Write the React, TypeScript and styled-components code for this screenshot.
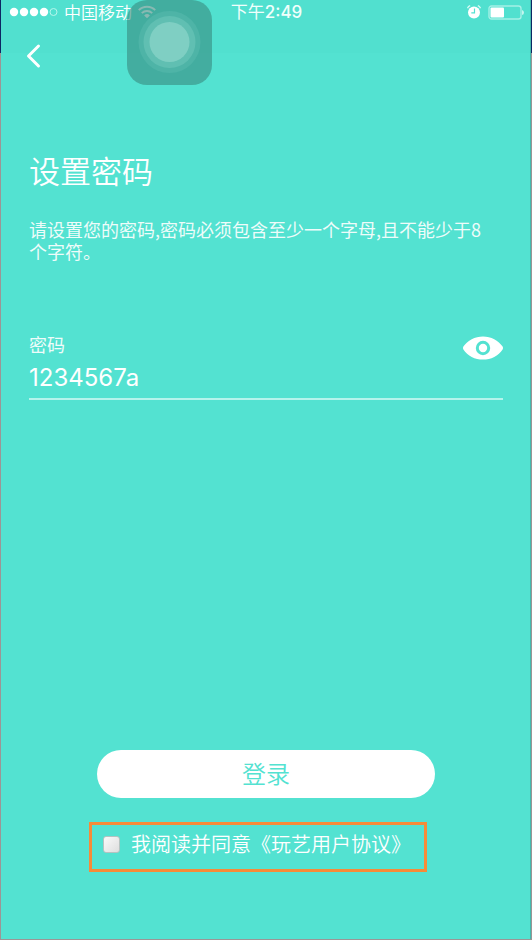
import React, { useState } from 'react';
import styled, { createGlobalStyle } from 'styled-components';

const teal = '#53e2d1';
const cjk = '"Noto Sans CJK SC", sans-serif';

const GlobalStyle = createGlobalStyle`
  * { box-sizing: border-box; }
  body { margin: 0; font-family: ${cjk}; }
`;

const Backdrop = styled.div`
  display: flex;
  min-height: 100vh;
  padding: 0 1px 1px;
  background: linear-gradient(#0d2763 0 53px, #9c9595 53px);
`;

const Screen = styled.main`
  position: relative;
  flex: 1;
  display: flex;
  flex-direction: column;
  color: #fff;
  background: linear-gradient(#51e0cf 0 53px, ${teal} 53px);
  border-right: 1px solid #46b9ad;
`;

const StatusBar = styled.header`
  display: grid;
  grid-template-columns: 1fr auto 1fr;
  align-items: center;
  height: 24px;
  padding: 0 6px 0 8px;
`;

const StatusGroup = styled.div<{ $end?: boolean }>`
  display: flex;
  align-items: center;
  justify-content: ${p => (p.$end ? 'flex-end' : 'flex-start')};
  gap: ${p => (p.$end ? 7 : 6)}px;
`;

const Carrier = styled.span`
  font-size: 17px;
  font-weight: 350;
  line-height: 24px;
  white-space: nowrap;
`;

const Time = styled.time`
  font: 500 17px/24px Inter, ${cjk};
  color: #f0fffc;
`;

const TimePeriod = styled.span`
  font-weight: 400;
`;

const AssistiveTouch = styled.button`
  position: absolute;
  top: 0;
  left: 126px;
  width: 85px;
  height: 85px;
  padding: 0;
  border: 0;
  border-radius: 20px;
  background: rgba(57, 139, 127, 0.6);
`;

const NavBar = styled.nav`
  display: flex;
  align-items: center;
  height: 64px;
  padding-left: 22px;
`;

const IconButton = styled.button`
  display: flex;
  padding: 0;
  border: 0;
  background: none;
  color: inherit;
  cursor: pointer;
`;

const Form = styled.form`
  flex: 1;
  display: flex;
  flex-direction: column;
  padding: 60px 27px 67px 28px;
`;

const Title = styled.h1`
  margin: 0;
  font-size: 31px;
  font-weight: 350;
  line-height: 44px;
`;

const Description = styled.p`
  margin: 26px 0 0;
  font-size: 18px;
  font-weight: 400;
  line-height: 22px;
  opacity: 0.9;
`;

const Field = styled.div`
  display: grid;
  grid-template-columns: 1fr auto;
  align-items: start;
  margin-top: 69px;
  padding-bottom: 2px;
  border-bottom: 2px solid #b5f4ec;
`;

const FieldLabel = styled.label`
  font-size: 18px;
  font-weight: 400;
  line-height: 26px;
  opacity: 0.9;
`;

const RevealButton = styled(IconButton)`
  padding-top: 5px;
`;

const PasswordInput = styled.input`
  grid-column: 1 / -1;
  width: 100%;
  height: 36px;
  padding: 0 0 2px;
  border: 0;
  outline: 0;
  background: none;
  color: #fff;
  font: 400 24px/34px Inter, ${cjk};
`;

const Actions = styled.div`
  display: flex;
  flex-direction: column;
  gap: 24px;
  margin-top: auto;
  padding: 0 68px;
`;

const LoginButton = styled.button`
  height: 48px;
  padding: 0 0 2px;
  border: 0;
  border-radius: 24px;
  background: #fff;
  color: ${teal};
  font: 350 24px/46px ${cjk};
  cursor: pointer;
`;

const Agreement = styled.div`
  display: flex;
  align-items: center;
  height: 50px;
  margin: 0 8px 0 -8px;
  padding: 0 0 6px 11px;
  border: 3px solid #f68b38;
`;

const Checkbox = styled.input`
  appearance: none;
  width: 17px;
  height: 17px;
  margin: 0 11px 0 0;
  border: 1px solid #b5c3c1;
  border-radius: 3px;
  background: linear-gradient(135deg, #fafafa, #dedede);

  &:checked {
    background: #2a9c8e;
  }
`;

const AgreementText = styled.label`
  font-size: 20px;
  font-weight: 350;
  line-height: 28px;
  white-space: nowrap;
`;

const AgreementLink = styled.a`
  color: inherit;
  text-decoration: none;
`;

const SignalDots = () => (
  <svg width="49" height="10" viewBox="0 0 49 10" fill="#fff" aria-hidden="true">
    {[5, 15, 25, 35].map(x => (
      <circle key={x} cx={x} cy="5" r="4.2" />
    ))}
    <circle cx="44.5" cy="5" r="3.5" fill="none" stroke="#b5f6ec" />
  </svg>
);

const WifiIcon = () => (
  <svg width="18" height="14" viewBox="0 0 18 14" fill="none" stroke="#fff" strokeWidth="2" aria-hidden="true">
    <path d="M.8 5.1a11.6 11.6 0 0 1 16.4 0M3.8 8.1a7.4 7.4 0 0 1 10.4 0" />
    <path d="M9 13.2 6.1 10.4a4.1 4.1 0 0 1 5.8 0Z" fill="#fff" stroke="none" />
  </svg>
);

const AlarmIcon = () => (
  <svg width="14" height="14" viewBox="0 0 14 14" aria-hidden="true">
    <circle cx="7" cy="7.5" r="6" fill="#fff" />
    <path d="M.5 3.2Q1.2 1.3 3.2.6M13.5 3.2Q12.8 1.3 10.8.6" fill="none" stroke="#d8fbf6" strokeWidth="1.3" />
    <path d="M7.5 3.6v4.2H4.3" fill="none" stroke={teal} strokeWidth="1.2" />
  </svg>
);

const BatteryIcon = () => (
  <svg width="36" height="15" viewBox="0 0 36 15" aria-hidden="true">
    <rect x="1" y="1" width="32" height="13" rx="2.5" fill="none" stroke="#a4f0e6" strokeWidth="1.4" />
    <rect x="2.5" y="2.5" width="13.5" height="10" rx="1" fill="#fff" />
    <path d="M34 5q2 .5 2 2.5T34 10z" fill="#c4f6ef" />
  </svg>
);

const BackIcon = () => (
  <svg width="20" height="26" viewBox="0 0 20 26" fill="none" stroke="currentColor" strokeWidth="3" strokeLinecap="round" strokeLinejoin="round" aria-hidden="true">
    <path d="M15.5 3 5.5 13l10 10" />
  </svg>
);

const EyeIcon = () => (
  <svg width="40" height="24" viewBox="0 0 40 24" aria-hidden="true">
    <path d="M.4 10.6C4.5 4.2 12 .4 20 .4s15.5 3.8 19.6 10.2q.8 1.4 0 2.8C35.5 19.8 28 23.6 20 23.6S4.5 19.8.4 13.4q-.8-1.4 0-2.8Z" fill="#fff" />
    <circle cx="20" cy="12" r="5.7" fill="none" stroke={teal} strokeWidth="3" />
  </svg>
);

const TouchRings = () => (
  <svg width="85" height="85" viewBox="0 0 85 85" aria-hidden="true">
    <circle cx="42.5" cy="42" r="31" fill="#4eb4a7" />
    <circle cx="42.5" cy="42" r="26" fill="#60bfb2" />
    <circle cx="42.5" cy="42" r="20" fill="#7fcfc3" />
  </svg>
);

export default function App() {
  const [password, setPassword] = useState('1234567a');
  const [visible, setVisible] = useState(true);
  const [agreed, setAgreed] = useState(false);

  return (
    <>
      <GlobalStyle />
      <Backdrop lang="zh-CN">
        <Screen>
          <StatusBar>
            <StatusGroup>
              <SignalDots />
              <Carrier>中国移动</Carrier>
              <WifiIcon />
            </StatusGroup>
            <Time dateTime="14:49">
              <TimePeriod>下午</TimePeriod>2:49
            </Time>
            <StatusGroup $end>
              <AlarmIcon />
              <BatteryIcon />
            </StatusGroup>
          </StatusBar>
          <NavBar>
            <IconButton type="button" aria-label="返回">
              <BackIcon />
            </IconButton>
          </NavBar>
          <Form onSubmit={e => e.preventDefault()}>
            <Title>设置密码</Title>
            <Description>
              请设置您的密码,密码必须包含至少一个字母,且不能少于8
              <br />
              个字符。
            </Description>
            <Field>
              <FieldLabel htmlFor="password">密码</FieldLabel>
              <RevealButton type="button" aria-label="显示密码" aria-pressed={visible} onClick={() => setVisible(v => !v)}>
                <EyeIcon />
              </RevealButton>
              <PasswordInput
                id="password"
                type={visible ? 'text' : 'password'}
                value={password}
                onChange={e => setPassword(e.target.value)}
              />
            </Field>
            <Actions>
              <LoginButton type="submit">登录</LoginButton>
              <Agreement>
                <Checkbox id="agree" type="checkbox" checked={agreed} onChange={e => setAgreed(e.target.checked)} />
                <AgreementText htmlFor="agree">
                  我阅读并同意<AgreementLink href="#agreement">《玩艺用户协议》</AgreementLink>
                </AgreementText>
              </Agreement>
            </Actions>
          </Form>
          <AssistiveTouch type="button" aria-label="辅助触控">
            <TouchRings />
          </AssistiveTouch>
        </Screen>
      </Backdrop>
    </>
  );
}
